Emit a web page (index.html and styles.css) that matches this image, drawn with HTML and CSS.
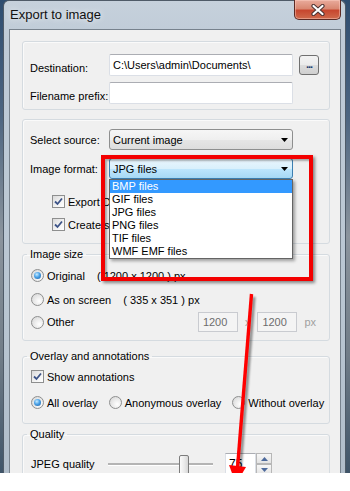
FILE: index.html
```html
<!DOCTYPE html>
<html lang="en">
<head>
    <meta charset="UTF-8">
    <meta name="viewport" content="width=device-width, initial-scale=1.0">
    <title>Export to image</title>
    <link rel="stylesheet" href="styles.css">
</head>
<body>
    <div class="shot">
        <div class="window">
            <div class="titlebar">
                <span class="title">Export to image</span>
                <button class="close" aria-label="Close">
                    <svg width="14" height="12" viewBox="0 0 14 12">
                        <path d="M2.5 2L11.5 10M11.5 2L2.5 10" stroke="#4a3232" stroke-width="4.2" stroke-linecap="round"/>
                        <path d="M2.5 2L11.5 10M11.5 2L2.5 10" stroke="#fff" stroke-width="2.2" stroke-linecap="round"/>
                    </svg>
                </button>
            </div>

            <div class="client">
                <!-- Destino -->
                <fieldset class="group g-dest">
                    <div class="field">
                        <label class="lbl">Destination:</label>
                        <div class="textbox">C:\Users\admin\Documents\</div>
                        <button class="browse">...</button>
                    </div>
                    <div class="field">
                        <label class="lbl">Filename prefix:</label>
                        <div class="textbox"></div>
                    </div>
                </fieldset>

                <!-- Fuente y formato -->
                <fieldset class="group g-source">
                    <div class="field">
                        <label class="lbl">Select source:</label>
                        <div class="combo">
                            <span>Current image</span>
                            <svg class="caret" width="7" height="4" viewBox="0 0 7 4"><path d="M0 0H7L3.5 4Z"/></svg>
                        </div>
                    </div>
                    <div class="field field-format">
                        <label class="lbl">Image format:</label>
                        <div class="combo-wrap">
                            <div class="combo focus">
                                <span>JPG files</span>
                                <svg class="caret" width="7" height="4" viewBox="0 0 7 4"><path d="M0 0H7L3.5 4Z"/></svg>
                            </div>
                            <ul class="droplist">
                                <li class="sel">BMP files</li>
                                <li>GIF files</li>
                                <li>JPG files</li>
                                <li>PNG files</li>
                                <li>TIF files</li>
                                <li>WMF EMF files</li>
                            </ul>
                        </div>
                    </div>
                    <div class="opt indent first">
                        <span class="check"><svg width="11" height="11" viewBox="0 0 11 11"><path d="M2 5.5L4.5 8L9 2.5" fill="none" stroke="#3d5488" stroke-width="1.8"/></svg></span>
                        <span>Export DICOM</span>
                    </div>
                    <div class="opt indent">
                        <span class="check"><svg width="11" height="11" viewBox="0 0 11 11"><path d="M2 5.5L4.5 8L9 2.5" fill="none" stroke="#3d5488" stroke-width="1.8"/></svg></span>
                        <span>Create subfolder</span>
                    </div>
                </fieldset>

                <!-- Tamaño -->
                <fieldset class="group g-size">
                    <legend>Image size</legend>
                    <div class="opt">
                        <span class="radio on"></span>
                        <span>Original</span>
                        <span class="dims">( 1200 x 1200 ) px</span>
                    </div>
                    <div class="opt r2">
                        <span class="radio"></span>
                        <span>As on screen</span>
                        <span class="dims">( 335 x 351 ) px</span>
                    </div>
                    <div class="opt r3">
                        <span class="radio"></span>
                        <span>Other</span>
                        <div class="custom">
                            <div class="dimbox">1200</div>
                            <span class="muted">x</span>
                            <div class="dimbox">1200</div>
                            <span class="muted">px</span>
                        </div>
                    </div>
                </fieldset>

                <!-- Overlay -->
                <fieldset class="group g-overlay">
                    <legend>Overlay and annotations</legend>
                    <div class="opt first">
                        <span class="check"><svg width="11" height="11" viewBox="0 0 11 11"><path d="M2 5.5L4.5 8L9 2.5" fill="none" stroke="#3d5488" stroke-width="1.8"/></svg></span>
                        <span>Show annotations</span>
                    </div>
                    <div class="opt radios">
                        <span class="choice"><span class="radio on"></span>All overlay</span>
                        <span class="choice"><span class="radio"></span>Anonymous overlay</span>
                        <span class="choice"><span class="radio"></span>Without overlay</span>
                    </div>
                </fieldset>

                <!-- Calidad -->
                <fieldset class="group g-quality">
                    <legend>Quality</legend>
                    <div class="quality">
                        <span class="qlbl">JPEG quality</span>
                        <div class="slider">
                            <div class="track"></div>
                            <div class="thumb" style="--v: 0.75"></div>
                        </div>
                        <div class="spin">
                            <div class="spin-val">75</div>
                            <div class="spin-btns">
                                <span class="spin-btn"><svg width="7" height="4" viewBox="0 0 7 4"><path d="M0 4H7L3.5 0Z"/></svg></span>
                                <span class="spin-btn"><svg width="7" height="4" viewBox="0 0 7 4"><path d="M0 0H7L3.5 4Z"/></svg></span>
                            </div>
                        </div>
                    </div>
                </fieldset>
            </div>
        </div>

        <!-- marcas rojas encima de la captura -->
        <div class="mark-box"></div>
        <svg class="mark-arrow" width="350" height="473" viewBox="0 0 350 473">
            <defs>
                <filter id="blur" x="-50%" y="-10%" width="200%" height="120%">
                    <feGaussianBlur stdDeviation="1.2"/>
                </filter>
            </defs>
            <g filter="url(#blur)" opacity="0.45">
                <line x1="254" y1="297" x2="240" y2="470" stroke="#000" stroke-width="3"/>
            </g>
            <line x1="251.5" y1="294" x2="237.5" y2="468" stroke="#f00" stroke-width="3.4"/>
            <polygon points="229,465 246,467 236,484" fill="#f00"/>
        </svg>
    </div>
</body>
</html>
```

FILE: styles.css
```css
* {
    box-sizing: border-box;
}

body {
    margin: 0;
    background: #fff;
    font-family: "Liberation Sans", Arial, sans-serif;
    font-size: 11px;
    color: #000;
}

.shot {
    position: relative;
    width: 350px;
    height: 473px;
    overflow: hidden;
    padding-left: 3px;
    background: linear-gradient(180deg, #2e4d70 0%, #4e6681 25%, #8b949d 50%, #717d88 75%, #3f5468 100%);
}

/* Ventana */
.window {
    width: 343px;
    height: 520px;
    display: flex;
    flex-direction: column;
    border: 1px solid #4f5b68;
    border-bottom: none;
    border-radius: 6px 6px 0 0;
    background: linear-gradient(180deg, #c6d1dc 0%, #bfcbd7 40px, #b9c6d2 300px, #aebbc8 100%);
}

.titlebar {
    height: 28px;
    display: flex;
    align-items: flex-start;
}

.title {
    padding: 6px 0 0 6px;
    font-size: 13px;
    line-height: 15px;
    color: #111;
    text-shadow: 0 0 6px rgba(255, 255, 255, 0.9);
}

.close {
    margin: -1px 4px 0 auto;
    width: 47px;
    height: 20px;
    padding: 0;
    display: flex;
    align-items: center;
    justify-content: center;
    border: 1px solid #5c2a24;
    border-top: none;
    border-radius: 0 0 5px 5px;
    background: linear-gradient(180deg, #e9ab9c 0%, #d98872 45%, #c7472f 55%, #cf6a4c 100%);
    box-shadow: inset 0 0 0 1px rgba(255, 210, 200, 0.45);
}

.client {
    flex: 1;
    margin: 0 4px 0 5px;
    border: 1px solid #77828d;
    background: #f0f0f0;
    padding: 11px 10px 0 12px;
    display: flex;
    flex-direction: column;
}

/* Cuadros de grupo */
.group {
    margin: 0;
    min-width: 0;
    border: 1px solid #d5dbe0;
    border-radius: 3px;
    padding: 0 7px;
    box-shadow: inset 1px 1px 0 #fafafa;
}

.group legend {
    margin-left: -4px;
    padding: 0 3px;
    line-height: 13px;
}

.g-dest {
    padding-top: 12px;
    padding-bottom: 5px;
}

.g-source {
    margin-top: 9px;
    padding-top: 9px;
    padding-bottom: 10px;
}

.g-size {
    margin-top: 4px;
    padding: 6px 8px 8px;
}

.g-overlay {
    margin-top: 9px;
    padding: 5px 8px 12px;
}

.g-quality {
    margin-top: 4px;
    padding: 12px 8px 20px;
}

.field {
    display: flex;
    align-items: center;
}

.g-dest .field + .field {
    margin-top: 6px;
}

.g-source .field + .field {
    margin-top: 8px;
}

.lbl {
    width: 79px;
    flex-shrink: 0;
    padding-top: 6px;
}

.g-source .lbl {
    padding-top: 1px;
}

.textbox {
    width: 184px;
    height: 22px;
    background: #fff;
    border: 1px solid #dbdfe6;
    border-top-color: #abadb3;
    border-radius: 2px;
    padding: 0 3px;
    line-height: 20px;
}

.browse {
    margin-left: 6px;
    width: 20px;
    height: 20px;
    padding: 0 0 3px;
    font-family: inherit;
    font-size: 11px;
    font-weight: bold;
    letter-spacing: -1px;
    color: #1c3870;
    border: 1px solid #707070;
    border-radius: 3px;
    background: linear-gradient(180deg, #f3f3f3 0%, #ebebeb 50%, #dddddd 50%, #cfcfcf 100%);
    line-height: 14px;
}

/* Combos */
.combo-wrap {
    position: relative;
}

.combo {
    width: 184px;
    height: 21px;
    display: flex;
    align-items: center;
    padding: 0 4px 0 3px;
    border: 1px solid #8e8f8f;
    border-radius: 3px;
    background: linear-gradient(180deg, #f6f6f6 0%, #efefef 50%, #e6e6e6 50%, #dddddd 100%);
}

.combo.focus {
    border-color: #3c7fb1;
    background: linear-gradient(180deg, #eaf6fd 0%, #d9f0fc 50%, #bee6fd 50%, #a7d9f5 100%);
}

.caret {
    margin-left: auto;
    fill: #000;
}

.droplist {
    position: absolute;
    top: 100%;
    left: 0;
    width: 184px;
    margin: 0;
    padding: 0;
    list-style: none;
    background: #fff;
    border: 1px solid #646464;
    box-shadow: 2px 2px 3px rgba(0, 0, 0, 0.35);
    z-index: 5;
}

.droplist li {
    height: 13px;
    line-height: 13px;
    padding-left: 2px;
}

.droplist li.sel {
    background: #3399ff;
    color: #fff;
}

/* Opciones */
.opt {
    display: flex;
    align-items: center;
    height: 17px;
    white-space: nowrap;
}

.indent {
    margin-left: 22px;
}

.g-source .opt.first {
    margin-top: 14px;
}

.g-source .opt + .opt {
    margin-top: 6px;
}

.check {
    width: 13px;
    height: 13px;
    margin-right: 3px;
    display: flex;
    align-items: center;
    justify-content: center;
    border: 1px solid #8e8f8f;
    background: linear-gradient(135deg, #dadada 0%, #f4f4f4 60%, #ffffff 100%);
    flex-shrink: 0;
}

.radio {
    position: relative;
    width: 13px;
    height: 13px;
    margin-right: 3px;
    border-radius: 50%;
    border: 1px solid #8e8f8f;
    background: radial-gradient(circle at 65% 65%, #ffffff 0%, #e9e9e9 50%, #d2d2d2 100%);
    flex-shrink: 0;
}

.radio.on::after {
    content: "";
    position: absolute;
    inset: 2px;
    border-radius: 50%;
    background: radial-gradient(circle at 40% 35%, #c8ecff 0%, #4aa2e8 45%, #1c5a9c 100%);
}

.dims {
    margin-left: 12px;
}

.g-size .r2 {
    margin-top: 7px;
}

.g-size .r3 {
    margin-top: 4px;
    height: 20px;
}

.custom {
    margin-left: auto;
    margin-right: 5px;
    display: flex;
    align-items: center;
    gap: 7px;
}

.dimbox {
    width: 40px;
    height: 20px;
    border: 1px solid #c9cbd0;
    background: #f4f4f4;
    color: #6d6d6d;
    line-height: 18px;
    padding-left: 4px;
}

.muted {
    color: #a0a0a0;
}

.radios {
    margin-top: 9px;
}

.choice {
    display: flex;
    align-items: center;
    flex-shrink: 0;
    margin-right: 11px;
}

/* Calidad */
.quality {
    display: flex;
    align-items: center;
    height: 22px;
}

.qlbl {
    width: 77px;
}

.slider {
    position: relative;
    width: 105px;
    height: 22px;
    display: flex;
    align-items: center;
}

.track {
    width: 100%;
    height: 2px;
    background: #b4b4b4;
    box-shadow: 0 1px 0 #fff;
}

.thumb {
    position: absolute;
    top: 2px;
    left: calc(var(--v) * (100% - 10px));
    width: 10px;
    height: 21px;
    border: 1px solid #7c7c7c;
    border-radius: 2px 2px 1px 1px;
    background: linear-gradient(90deg, #fbfbfb 0%, #e8e8e8 60%, #d6d6d6 100%);
}

.spin {
    margin-left: 12px;
    display: flex;
    height: 22px;
}

.spin-val {
    width: 31px;
    height: 22px;
    background: #fff;
    border: 1px solid #dbdfe6;
    border-top-color: #abadb3;
    padding-left: 3px;
    line-height: 20px;
    font-size: 12px;
}

.spin-btns {
    display: flex;
    flex-direction: column;
    width: 16px;
}

.spin-btn {
    height: 11px;
    display: flex;
    align-items: center;
    justify-content: center;
    border: 1px solid #b7b7b7;
    background: linear-gradient(180deg, #f7f7f7, #e4e4e4);
    fill: #4d6a9c;
}

/* Marcas */
.mark-box {
    position: absolute;
    left: 101px;
    top: 155px;
    width: 212px;
    height: 126px;
    border: 4px solid #f30000;
    box-shadow: 2px 2px 3px rgba(0, 0, 0, 0.45), inset 2px 2px 2px rgba(0, 0, 0, 0.3);
    z-index: 10;
}

.mark-arrow {
    position: absolute;
    left: 0;
    top: 0;
    z-index: 11;
    pointer-events: none;
}
```
